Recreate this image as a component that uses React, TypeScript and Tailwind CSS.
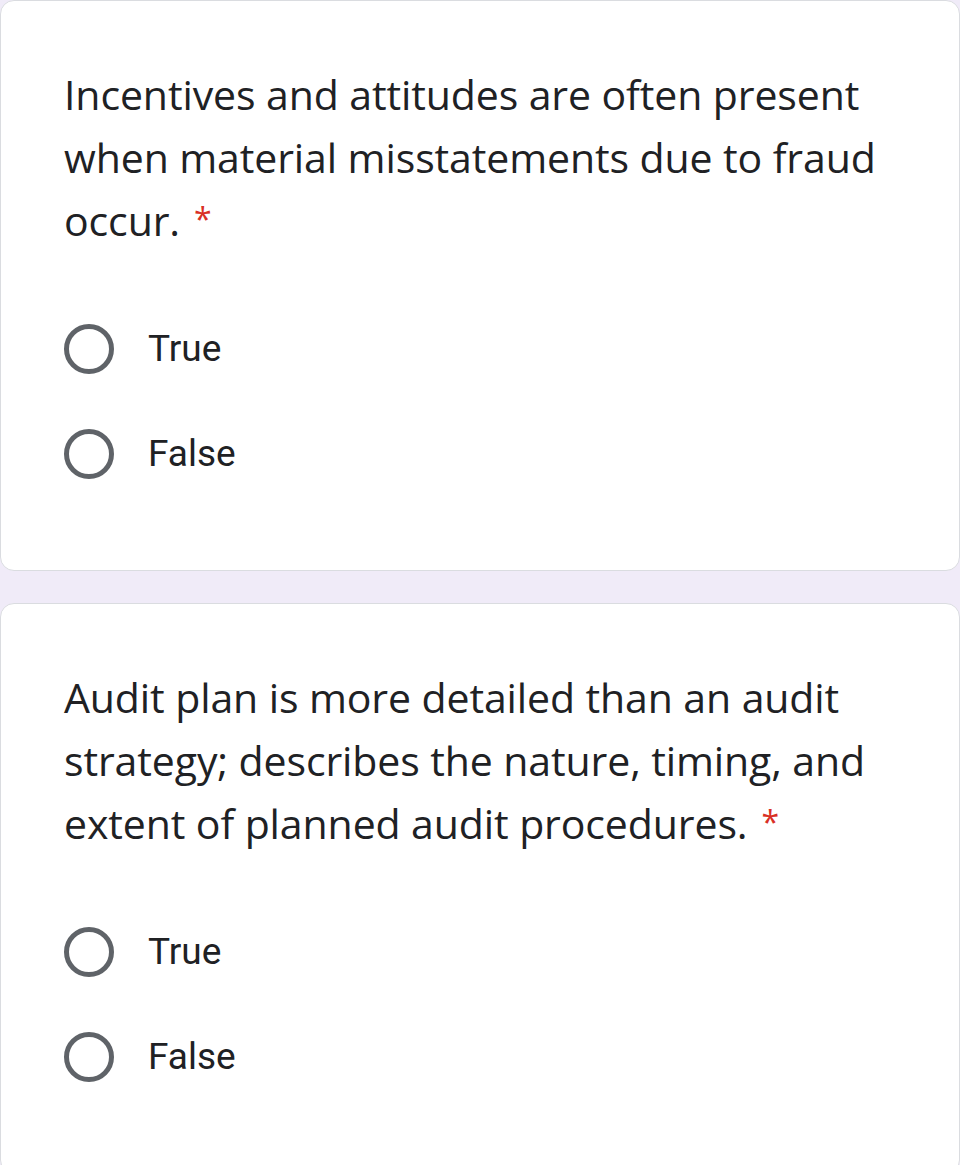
import React from "react";

type Question = {
  title: string;
  options: string[];
};

const questions: Question[] = [
  {
    title: "Incentives and attitudes are often present when material misstatements due to fraud occur.",
    options: ["True", "False"],
  },
  {
    title: "Audit plan is more detailed than an audit strategy; describes the nature, timing, and extent of planned audit procedures.",
    options: ["True", "False"],
  },
];

function Radio() {
  return (
    <div className="w-[50px] h-[50px] rounded-full border-[5px] border-[#5f6368] shrink-0" />
  );
}

function QuestionCard({ q }: { q: Question }) {
  return (
    <div className="bg-white border border-[#dadce0] rounded-[14px] pt-[62px] pb-[64px] pl-[63px] pr-[60px]">
      <div
        className="text-[#202124] text-[41px] leading-[63px] tracking-[-0.1px]"
        style={{ fontFamily: '"Open Sans", "Noto Sans", sans-serif' }}
      >
        {q.title}
        <span className="inline-block text-[#d93025] text-[32px] leading-none align-top ml-[14px] mt-[14px]">
          *
        </span>
      </div>
      <div className="mt-[44px] flex flex-col">
        {q.options.map((opt) => (
          <div key={opt} className="h-[105px] flex items-center">
            <Radio />
            <span
              className="ml-[34px] text-[#202124] text-[37px]"
              style={{ fontFamily: "Roboto, sans-serif" }}
            >
              {opt}
            </span>
          </div>
        ))}
      </div>
    </div>
  );
}

export default function App() {
  return (
    <div className="min-h-screen bg-[#f0ebf8] flex flex-col gap-[32px]">
      {questions.map((q, i) => (
        <QuestionCard key={i} q={q} />
      ))}
    </div>
  );
}
